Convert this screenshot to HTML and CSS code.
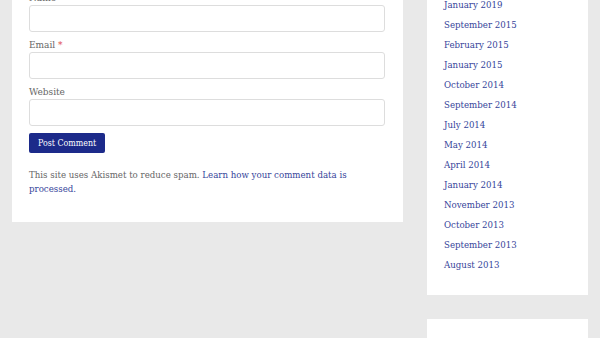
FILE: index.html
```html
<!DOCTYPE html>
<html lang="en">
  <head>
    <meta charset="UTF-8" />
    <meta name="viewport" content="width=device-width, initial-scale=1.0" />
    <title>Leave a Reply</title>
    <link rel="stylesheet" href="styles.css">
  </head>
  <body>
    <div class="page">
      <main class="content">
        <form class="comment-form">
          <label for="author">Name <span class="required">*</span></label>
          <input type="text" id="author" />

          <label for="email">Email <span class="required">*</span></label>
          <input type="text" id="email" />

          <label for="url">Website</label>
          <input type="text" id="url" />

          <button type="button">Post Comment</button>
        </form>
        <p class="akismet">
          This site uses Akismet to reduce spam.
          <a href="#">Learn how your comment data is processed.</a>
        </p>
      </main>

      <aside class="sidebar">
        <section class="widget archives">
          <ul>
            <li><a href="#">January 2019</a></li>
            <li><a href="#">September 2015</a></li>
            <li><a href="#">February 2015</a></li>
            <li><a href="#">January 2015</a></li>
            <li><a href="#">October 2014</a></li>
            <li><a href="#">September 2014</a></li>
            <li><a href="#">July 2014</a></li>
            <li><a href="#">May 2014</a></li>
            <li><a href="#">April 2014</a></li>
            <li><a href="#">January 2014</a></li>
            <li><a href="#">November 2013</a></li>
            <li><a href="#">October 2013</a></li>
            <li><a href="#">September 2013</a></li>
            <li><a href="#">August 2013</a></li>
          </ul>
        </section>
        <section class="widget empty"></section>
      </aside>
    </div>
  </body>
</html>
```

FILE: styles.css
```css
body {
  margin: 0;
  background-color: #e9e9e9;
  color: #666;
  font-family: "DejaVu Serif Condensed", "DejaVu Serif", serif;
  font-stretch: condensed;
  font-size: 9.6px;
  overflow: hidden;
}
a {
  color: #35449a;
  text-decoration: none;
}
.page {
  display: flex;
  align-items: flex-start;
  gap: 24px;
  padding-left: 12px;
  margin-top: -19px;
}
.content {
  width: 356px;
  background-color: #fff;
  padding: 10px 18px 26px 17px;
}
.comment-form {
  display: flex;
  flex-direction: column;
  align-items: flex-start;
}
.comment-form label {
  display: block;
  line-height: 14px;
  font-size: 10px;
  color: #666;
}
.required {
  color: #e04b4b;
}
.comment-form input {
  box-sizing: border-box;
  width: 100%;
  height: 27px;
  margin: 0 0 6px;
  border: 1px solid #ddd;
  border-radius: 3px;
  background-color: #fff;
}
.comment-form button {
  margin-top: 1px;
  height: 20px;
  padding: 0 9px;
  border: none;
  border-radius: 2px;
  background-color: #1c2a8a;
  color: #fff;
  font-family: "DejaVu Serif Condensed", "DejaVu Serif", serif;
  font-stretch: condensed;
  font-size: 8.8px;
  cursor: pointer;
}
.akismet {
  margin: 15px 0 0;
  line-height: 14px;
}
.sidebar {
  width: 161px;
  display: flex;
  flex-direction: column;
  gap: 24px;
}
.widget {
  background-color: #fff;
  padding: 0 17px;
}
.archives ul {
  list-style: none;
  margin: 0;
  padding: 14px 0 20px;
}
.archives li {
  line-height: 20px;
}
.empty {
  height: 60px;
}
```
